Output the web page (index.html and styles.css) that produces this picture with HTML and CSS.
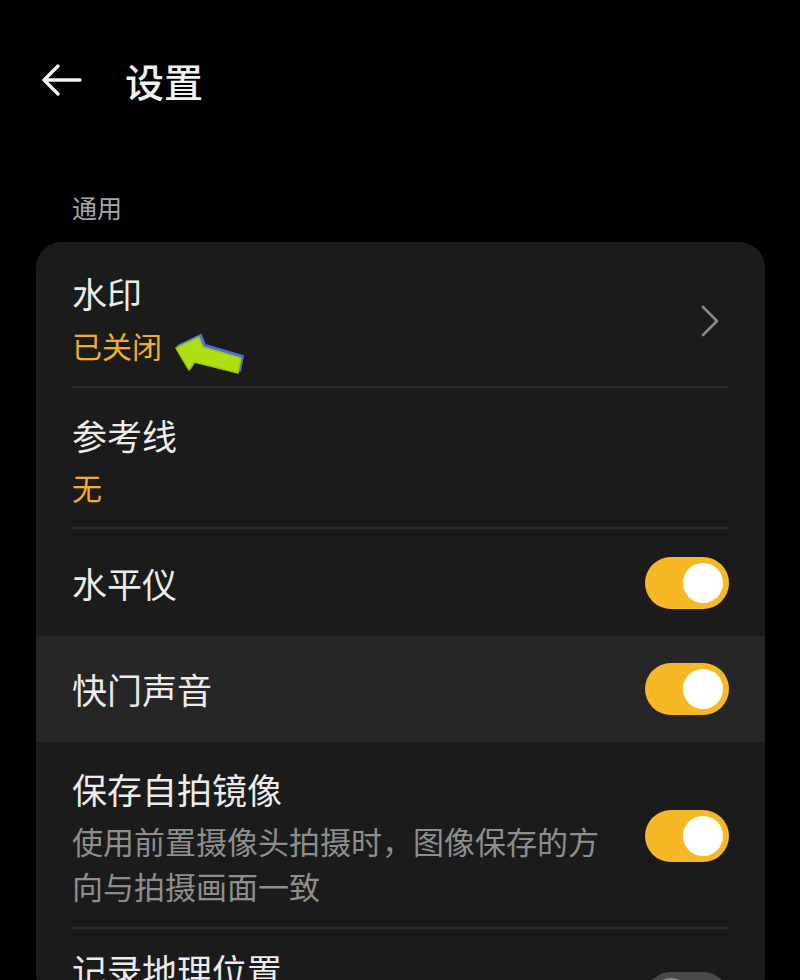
FILE: index.html
```html
<!DOCTYPE html>
<html lang="zh-CN">
<head>
<meta charset="utf-8">
<link rel="stylesheet" href="styles.css">
</head>
<body>
<div class="page">
  <header class="topbar">
    <svg class="back" width="44" height="36" viewBox="0 0 44 36">
      <path d="M40 18 H4 M18 4 L4 18 L18 32" fill="none" stroke="#f2f2f2" stroke-width="3.4" stroke-linecap="round" stroke-linejoin="round"/>
    </svg>
    <h1 class="title">设置</h1>
  </header>
  <div class="section-label">通用</div>
  <div class="card">
    <div class="row row-1 divided">
      <div class="texts">
        <div class="item-title">水印</div>
        <div class="item-sub">已关闭</div>
      </div>
      <svg class="chevron" width="22" height="34" viewBox="0 0 22 34">
        <path d="M4 3 L18 17 L4 31" fill="none" stroke="#8a8a8a" stroke-width="2.6" stroke-linecap="round" stroke-linejoin="round"/>
      </svg>
      <svg class="annot" width="84" height="56" viewBox="0 0 84 56">
        <path d="M10 23 L33 12 L37 22 L75 33 L72 48 L28 37 L23 45 Z" fill="#4a6ee0" stroke="#4a6ee0" stroke-width="2" stroke-linejoin="round" transform="translate(2,-2)"/>
        <path d="M10 23 L33 12 L37 22 L75 33 L72 48 L28 37 L23 45 Z" fill="#b0e012" stroke="#9cc80e" stroke-width="1.5" stroke-linejoin="round"/>
      </svg>
    </div>
    <div class="row row-2 divided">
      <div class="texts">
        <div class="item-title">参考线</div>
        <div class="item-sub">无</div>
      </div>
    </div>
    <div class="row row-single">
      <div class="item-title">水平仪</div>
      <div class="toggle on"><span class="knob"></span></div>
    </div>
    <div class="row row-single highlight">
      <div class="item-title">快门声音</div>
      <div class="toggle on"><span class="knob"></span></div>
    </div>
    <div class="row row-5 divided">
      <div class="texts">
        <div class="item-title">保存自拍镜像</div>
        <div class="item-desc">使用前置摄像头拍摄时，图像保存的方向与拍摄画面一致</div>
      </div>
      <div class="toggle on"><span class="knob"></span></div>
    </div>
    <div class="row row-6">
      <div class="item-title">记录地理位置</div>
      <div class="toggle off"><span class="knob"></span></div>
    </div>
  </div>
</div>
</body>
</html>
```
FILE: styles.css
```css
* { box-sizing: border-box; }
html, body {
  margin: 0;
  padding: 0;
  background: #000;
  overflow: hidden;
}
body {
  width: 800px;
  height: 980px;
  font-family: "Noto Sans CJK SC", "Noto Sans", sans-serif;
  color: #ececec;
}
.page {
  padding: 0 35px 0 36px;
}
.topbar {
  height: 160px;
  display: flex;
  align-items: center;
  gap: 41px;
  padding-left: 4px;
}
.back { display: block; flex: none; }
.title {
  margin: 0;
  font-size: 39px;
  font-weight: 500;
  color: #f0f0f0;
  line-height: 1;
}
.section-label {
  padding-left: 36px;
  font-size: 25px;
  line-height: 34px;
  color: #a6a6a6;
  margin-top: 30px;
  margin-bottom: 18px;
}
.card {
  background: #1b1b1b;
  border-radius: 26px;
  overflow: hidden;
  height: 760px;
}
.row {
  position: relative;
  display: flex;
  align-items: center;
  justify-content: space-between;
  padding: 0 36px;
}
.row.divided::after {
  content: "";
  position: absolute;
  left: 36px;
  right: 36px;
  bottom: 0;
  height: 2px;
  background: #2c2c2c;
}
.texts { display: flex; flex-direction: column; }
.item-title {
  font-size: 35px;
  line-height: 44px;
  color: #ececec;
}
.item-sub {
  font-size: 30px;
  line-height: 44px;
  color: #f4ad2b;
  margin-top: 8px;
}
.item-desc {
  font-size: 31px;
  line-height: 45px;
  color: #8e8e8e;
  width: 540px;
  margin-top: 7px;
}
.row-1 { height: 146px; padding-top: 8px; }
.row-2 { height: 141px; padding-top: 4px; }
.row-single { height: 107px; }
.row-single.highlight { height: 106px; background: #262626; }
.row-5 { height: 187px; align-items: flex-start; padding-top: 25px; }
.row-5 .toggle { margin-top: 43px; }
.row-6 { height: 90px; align-items: flex-start; padding-top: 19px; }
.row-6 .toggle { margin-top: 24px; }
.chevron { display: block; margin-right: 8px; margin-top: 4px; }
.annot {
  position: absolute;
  left: 130px;
  top: 83px;
}
.toggle {
  width: 84px;
  height: 52px;
  border-radius: 26px;
  position: relative;
  flex: none;
}
.toggle.on { background: #f7b825; }
.toggle.off { background: #4a4a4a; }
.knob {
  position: absolute;
  top: 6px;
  width: 40px;
  height: 40px;
  border-radius: 50%;
  background: #fff;
}
.toggle.on .knob { right: 6px; }
.toggle.off .knob { left: 6px; background: #8c8c8c; }
```
